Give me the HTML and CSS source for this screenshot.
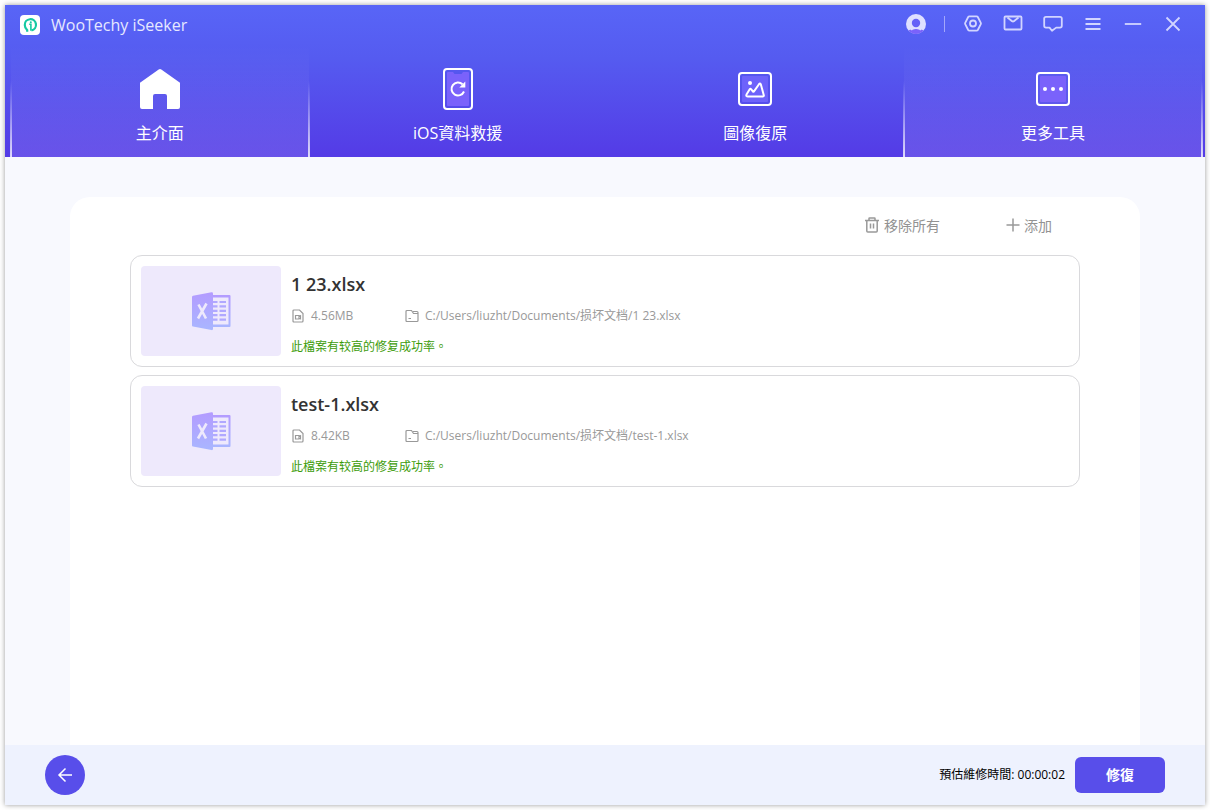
FILE: index.html
```html
<!DOCTYPE html>
<html lang="zh-Hant">
<head>
<meta charset="utf-8">
<meta name="viewport" content="width=device-width, initial-scale=1">
<title>WooTechy iSeeker</title>
<link rel="stylesheet" href="styles.css">
</head>
<body>
<div class="window">
  <header class="header">
    <div class="titlebar">
      <svg class="logo" viewBox="0 0 20 20" aria-hidden="true">
        <rect width="20" height="20" rx="4" fill="#fff"/>
        <path d="M7.200 16.800V15.200Q4.800 13.300 4.800 10A5.600 5.600 0 1 1 11.500 15.300" fill="none" stroke="#14c9a2" stroke-width="2.200"/>
        <path d="M9.200 9.300h1.700v6.500" fill="none" stroke="#14c9a2" stroke-width="1.600"/>
        <circle cx="10.800" cy="7.200" r="1" fill="#14c9a2"/>
      </svg>
      <h1 class="app-name">WooTechy iSeeker</h1>
      <div class="actions">
        <button class="icon-button" type="button" aria-label="Account">
          <svg width="20" height="20" viewBox="0 0 20 20">
            <circle cx="10" cy="10" r="10" fill="#dfe0ff"/>
            <circle cx="10" cy="9" r="4.200" fill="#6661f7"/>
            <path d="M2.500 16.600L4.500 15.400Q5.400 17 6.600 15.800Q10 14.200 13.400 15.800Q14.600 17 15.500 15.400L17.500 16.600A10 10 0 0 1 2.500 16.600Z" fill="#7a62fb"/>
          </svg>
        </button>
        <span class="divider"></span>
        <button class="icon-button" type="button" aria-label="Settings">
          <svg width="20" height="20" viewBox="0 0 20 20" class="line">
            <path d="M6.400 2.300h7.200q.8 0 1.200.7l3 5.900q.3.600 0 1.200l-3 5.900q-.4.700-1.200.7H6.400q-.8 0-1.200-.7l-3-5.900q-.3-.6 0-1.200l3-5.900q.4-.7 1.200-.7z"/>
            <circle cx="10" cy="9.500" r="3"/>
          </svg>
        </button>
        <button class="icon-button" type="button" aria-label="Mail">
          <svg width="20" height="20" viewBox="0 0 20 20" class="line">
            <rect x="1.500" y="2.500" width="17" height="13" rx="1"/><path d="M4.500 3.500l4.600 3.700q.9.600 1.800 0l4.600-3.700"/>
          </svg>
        </button>
        <button class="icon-button" type="button" aria-label="Feedback">
          <svg width="20" height="20" viewBox="0 0 20 20" class="line">
            <path d="M3 2.800h14q1.800 0 1.800 1.800v7.200q0 1.800-1.800 1.800h-3.800L9 16.800 6.500 13.600H3q-1.800 0-1.800-1.800V4.600q0-1.800 1.800-1.800z"/>
          </svg>
        </button>
        <button class="icon-button" type="button" aria-label="Menu">
          <svg width="20" height="20" viewBox="0 0 20 20" class="line"><path d="M2.500 5h15M2.500 10h15M2.500 15h15"/></svg>
        </button>
        <button class="icon-button" type="button" aria-label="Minimize">
          <svg width="20" height="20" viewBox="0 0 20 20" class="line"><path d="M1.800 10h16.400"/></svg>
        </button>
        <button class="icon-button" type="button" aria-label="Close">
          <svg width="20" height="20" viewBox="0 0 20 20" class="line"><path d="M3.500 3.500l13 13M16.500 3.500l-13 13"/></svg>
        </button>
      </div>
    </div>
    <nav class="tabs">
      <button class="tab tab-raised" type="button">
        <svg width="44" height="44" viewBox="0 0 44 44"><path d="M20.700 2.500q1.300-.8 2.600 0L42 15.800V40q0 2-2 2H29V29q0-2-2-2H17q-2 0-2 2v13H4q-2 0-2-2V15.800z" fill="#fff"/></svg>
        <span>主介面</span>
      </button>
      <button class="tab" type="button">
        <svg width="44" height="44" viewBox="0 0 44 44">
          <rect x="8" y="2" width="28" height="40" rx="3" fill="none" stroke="#fff" stroke-width="2"/>
          <path d="M12 5h5l1.500 2h7L27 5h5q1 0 1 1v32q0 1-1 1H12q-1 0-1-1V6q0-1 1-1z" fill="#7a62fb"/>
          <path d="M28 24.500A6.500 6.500 0 1 1 26.500 17.200" fill="none" stroke="#fff" stroke-width="2"/>
          <path d="M29.300 14.500v6h-6z" fill="#fff"/>
        </svg>
        <span>iOS資料救援</span>
      </button>
      <button class="tab" type="button">
        <svg width="44" height="44" viewBox="0 0 44 44">
          <rect x="6" y="6" width="32" height="32" rx="3" fill="none" stroke="#fff" stroke-width="2"/>
          <rect x="9" y="9" width="26" height="26" rx="1" fill="#6d62fb"/>
          <circle cx="17" cy="16" r="2" fill="#fff"/>
          <path d="M13.500 27.500l3.200-5.200q.7-1 1.500 0l1.800 2.200q.5.600 1-.1l5-7.200q1-1.200 1.800 0l3 11q.3 1.300-1.200 1.300H15q-2.300 0-1.500-2z" fill="none" stroke="#fff" stroke-width="2" stroke-linejoin="round"/>
        </svg>
        <span>圖像復原</span>
      </button>
      <button class="tab tab-raised" type="button">
        <svg width="44" height="44" viewBox="0 0 44 44">
          <rect x="6" y="6" width="32" height="32" rx="3" fill="none" stroke="#fff" stroke-width="2"/>
          <rect x="9" y="9" width="26" height="26" rx="1" fill="#7a62fb"/>
          <g fill="#fff"><circle cx="14" cy="22" r="2"/><circle cx="22" cy="22" r="2"/><circle cx="30" cy="22" r="2"/></g>
        </svg>
        <span>更多工具</span>
      </button>
    </nav>
  </header>

  <main class="main">
    <section class="panel">
      <div class="toolbar">
        <button class="tool" type="button">
          <svg width="16" height="20" viewBox="0 0 16 20" class="gray"><path d="M1 4.500h14M5 4V2.500Q5 2 5.500 2h5q.5 0 .5.500V4M2.800 4.500V15q0 1 1 1h8.400q1 0 1-1V4.500M6.500 7.500v5M9.500 7.500v5"/></svg>
          <span>移除所有</span>
        </button>
        <button class="tool" type="button">
          <svg width="14" height="20" viewBox="0 0 14 20" class="gray"><path d="M7 2.500v13M.5 9h13"/></svg>
          <span>添加</span>
        </button>
      </div>
      <ul class="files">
        <li class="file">
          <div class="thumb">
            <svg width="40" height="40" viewBox="0 0 40 40" aria-hidden="true">
              <defs><linearGradient id="excel-fill" x1="0" y1="0" x2="0" y2="1"><stop offset="0" stop-color="#b39bff"/><stop offset="1" stop-color="#a9b6ff"/></linearGradient></defs>
              <path d="M20 4h18.500q1 0 1 1v30q0 1-1 1H20z" fill="url(#excel-fill)"/>
              <path d="M22 6.500h15.500v27H22z" fill="#eee9fc"/>
              <path d="M22 11h4.500M22 15.400h4.500M22 19.800h4.500M22 24.200h4.500M22 28.600h4.500M28.500 11h6.500M28.500 15.400h6.500M28.500 19.800h6.500M28.500 24.200h6.500M28.500 28.600h6.500" stroke="#b0a8ff" stroke-width="2.200"/>
              <path d="M2 4.800L20.500 1.200q1.500-.2 1.500 1.300v35.500q0 1.300-1.500 1.100L2 35.600q-1-.2-1-1.200V6q0-1 1-1.200z" fill="url(#excel-fill)"/>
              <path d="M7.500 13.500L15 27.500M15.500 12.500L7 27.500" stroke="#eee9fc" stroke-width="2.600"/>
            </svg>
          </div>
          <div class="details">
            <h2 class="name">1 23.xlsx</h2>
            <div class="meta">
              <span class="size"><svg width="14" height="14" viewBox="0 0 14 14" class="gray thin"><path d="M3 1h5.500l3.500 3.500V12q0 1-1 1H3q-1 0-1-1V2q0-1 1-1zM4.500 6.500h3.500v1l1.500-.7v3L8 9v1H4.500z"/></svg>4.56MB</span>
              <span class="path"><svg width="14" height="14" viewBox="0 0 14 14" class="gray thin"><path d="M2 1.500h4.500l2 3h4.500M8 2.500h4q1 0 1 1v8q0 1-1 1H2q-1 0-1-1v-9q0-1 1-1M3.500 9.500h2.500"/></svg>C:/Users/liuzht/Documents/损坏文档/1 23.xlsx</span>
            </div>
            <p class="status">此檔案有较高的修复成功率。</p>
          </div>
        </li>
        <li class="file">
          <div class="thumb">
            <svg width="40" height="40" viewBox="0 0 40 40" aria-hidden="true">
              <path d="M20 4h18.500q1 0 1 1v30q0 1-1 1H20z" fill="url(#excel-fill)"/>
              <path d="M22 6.500h15.500v27H22z" fill="#eee9fc"/>
              <path d="M22 11h4.500M22 15.400h4.500M22 19.800h4.500M22 24.200h4.500M22 28.600h4.500M28.500 11h6.500M28.500 15.400h6.500M28.500 19.800h6.500M28.500 24.200h6.500M28.500 28.600h6.500" stroke="#b0a8ff" stroke-width="2.200"/>
              <path d="M2 4.800L20.500 1.200q1.500-.2 1.500 1.300v35.500q0 1.300-1.500 1.100L2 35.600q-1-.2-1-1.200V6q0-1 1-1.200z" fill="url(#excel-fill)"/>
              <path d="M7.500 13.500L15 27.500M15.500 12.500L7 27.500" stroke="#eee9fc" stroke-width="2.600"/>
            </svg>
          </div>
          <div class="details">
            <h2 class="name">test-1.xlsx</h2>
            <div class="meta">
              <span class="size"><svg width="14" height="14" viewBox="0 0 14 14" class="gray thin"><path d="M3 1h5.500l3.500 3.500V12q0 1-1 1H3q-1 0-1-1V2q0-1 1-1zM4.500 6.500h3.500v1l1.500-.7v3L8 9v1H4.500z"/></svg>8.42KB</span>
              <span class="path"><svg width="14" height="14" viewBox="0 0 14 14" class="gray thin"><path d="M2 1.500h4.500l2 3h4.500M8 2.500h4q1 0 1 1v8q0 1-1 1H2q-1 0-1-1v-9q0-1 1-1M3.500 9.500h2.500"/></svg>C:/Users/liuzht/Documents/损坏文档/test-1.xlsx</span>
            </div>
            <p class="status">此檔案有较高的修复成功率。</p>
          </div>
        </li>
      </ul>
    </section>
  </main>

  <footer class="footer">
    <button class="back" type="button" aria-label="返回">
      <svg width="20" height="20" viewBox="0 0 20 20"><path d="M17 10H4M10.500 3.500L4 10l6.500 6.500" fill="none" stroke="#fff" stroke-width="1.500"/></svg>
    </button>
    <span class="estimate">預估維修時間: 00:00:02</span>
    <button class="repair" type="button">修復</button>
  </footer>
</div>
</body>
</html>
```
FILE: styles.css
```css
* {
  box-sizing: border-box;
}

body {
  margin: 0;
  padding: 5px;
  min-height: 100vh;
  display: flex;
  background: #fff;
  font-family: "Open Sans", "Noto Sans CJK TC", "Noto Sans CJK SC", sans-serif;
  font-size: 12px;
  line-height: 20px;
}

h1, h2, p, ul {
  margin: 0;
  padding: 0;
}

button {
  border: 0;
  padding: 0;
  background: none;
  color: inherit;
  font: inherit;
  cursor: pointer;
}

svg {
  display: block;
  flex: none;
}

.window {
  flex: 1;
  display: flex;
  flex-direction: column;
  background: #f8f9fe;
  box-shadow: 0 0 5px rgba(0, 0, 0, 0.4);
}

.header {
  color: #fff;
  background: linear-gradient(#5865f7, #555bf0 35%, #543be6);
}

.titlebar {
  display: flex;
  align-items: center;
  height: 40px;
  padding: 0 22px 0 15px;
}

.logo {
  width: 20px;
  height: 20px;
}

.app-name {
  margin-left: 11px;
  font-size: 16px;
  font-weight: 400;
  color: #e6e8ff;
}

.actions {
  display: flex;
  align-items: center;
  gap: 20px;
  margin-left: auto;
  padding-bottom: 2px;
}

.icon-button {
  width: 20px;
  height: 20px;
}

.divider {
  width: 1px;
  height: 16px;
  margin: 0 -2px;
  background: #a3a7fb;
}

.line {
  fill: none;
  stroke: #d2d5ff;
  stroke-width: 1.8;
  stroke-linejoin: round;
}

.tabs {
  display: grid;
  grid-template-columns: repeat(4, 1fr);
  padding: 0 3px 0 6px;
}

.tab {
  position: relative;
  display: flex;
  flex-direction: column;
  align-items: center;
  gap: 12px;
  height: 112px;
  padding-top: 22px;
  font-size: 16px;
}

.tab-raised {
  background: linear-gradient(rgba(255, 255, 255, 0), rgba(255, 255, 255, 0.01) 10%, rgba(255, 255, 255, 0.12));
}

.tab-raised::before,
.tab-raised::after {
  content: "";
  position: absolute;
  bottom: 0;
  width: 2px;
  height: 76px;
  background: linear-gradient(rgba(255, 255, 255, 0), rgba(255, 255, 255, 0.8));
}

.tab-raised::before {
  left: -1px;
}

.tab-raised::after {
  right: -1px;
}

.main {
  flex: 1;
  display: flex;
  padding: 40px 65px 0;
}

.panel {
  flex: 1;
  padding: 19px 60px;
  background: #fff;
  border-radius: 20px 20px 0 0;
}

.toolbar {
  display: flex;
  justify-content: flex-end;
  gap: 66px;
  height: 39px;
  padding-right: 28px;
}

.tool {
  display: flex;
  align-items: center;
  gap: 4px;
  height: 20px;
  font-size: 14px;
  color: #929292;
}

.gray {
  fill: none;
  stroke: #999;
  stroke-width: 1.5;
}

.thin {
  stroke-width: 1.2;
}

.files {
  display: flex;
  flex-direction: column;
  gap: 8px;
  list-style: none;
}

.file {
  display: flex;
  gap: 10px;
  padding: 10px;
  border: 1px solid #d9d9dc;
  border-radius: 12px;
}

.thumb {
  display: flex;
  align-items: center;
  justify-content: center;
  width: 140px;
  height: 90px;
  background: #eee9fc;
  border-radius: 4px;
}

.name {
  margin-top: 8px;
  font-size: 18px;
  font-weight: 600;
  color: #333;
}

.meta {
  display: flex;
  margin-top: 12px;
  color: #999;
}

.size,
.path {
  display: flex;
  align-items: center;
  gap: 6px;
}

.size {
  width: 114px;
}

.status {
  margin-top: 12px;
  line-height: 18px;
  color: #3d9c0b;
}

.footer {
  display: flex;
  align-items: center;
  height: 60px;
  padding: 0 40px;
  background: #eef2fe;
}

.back {
  display: flex;
  align-items: center;
  justify-content: center;
  width: 40px;
  height: 40px;
  border-radius: 50%;
  background: #584eea;
}

.estimate {
  margin-left: auto;
  margin-right: 10px;
  color: #000;
}

.repair {
  width: 90px;
  height: 36px;
  border-radius: 6px;
  background: #584eea;
  color: #fff;
  font-size: 14px;
  font-weight: 600;
}
```
